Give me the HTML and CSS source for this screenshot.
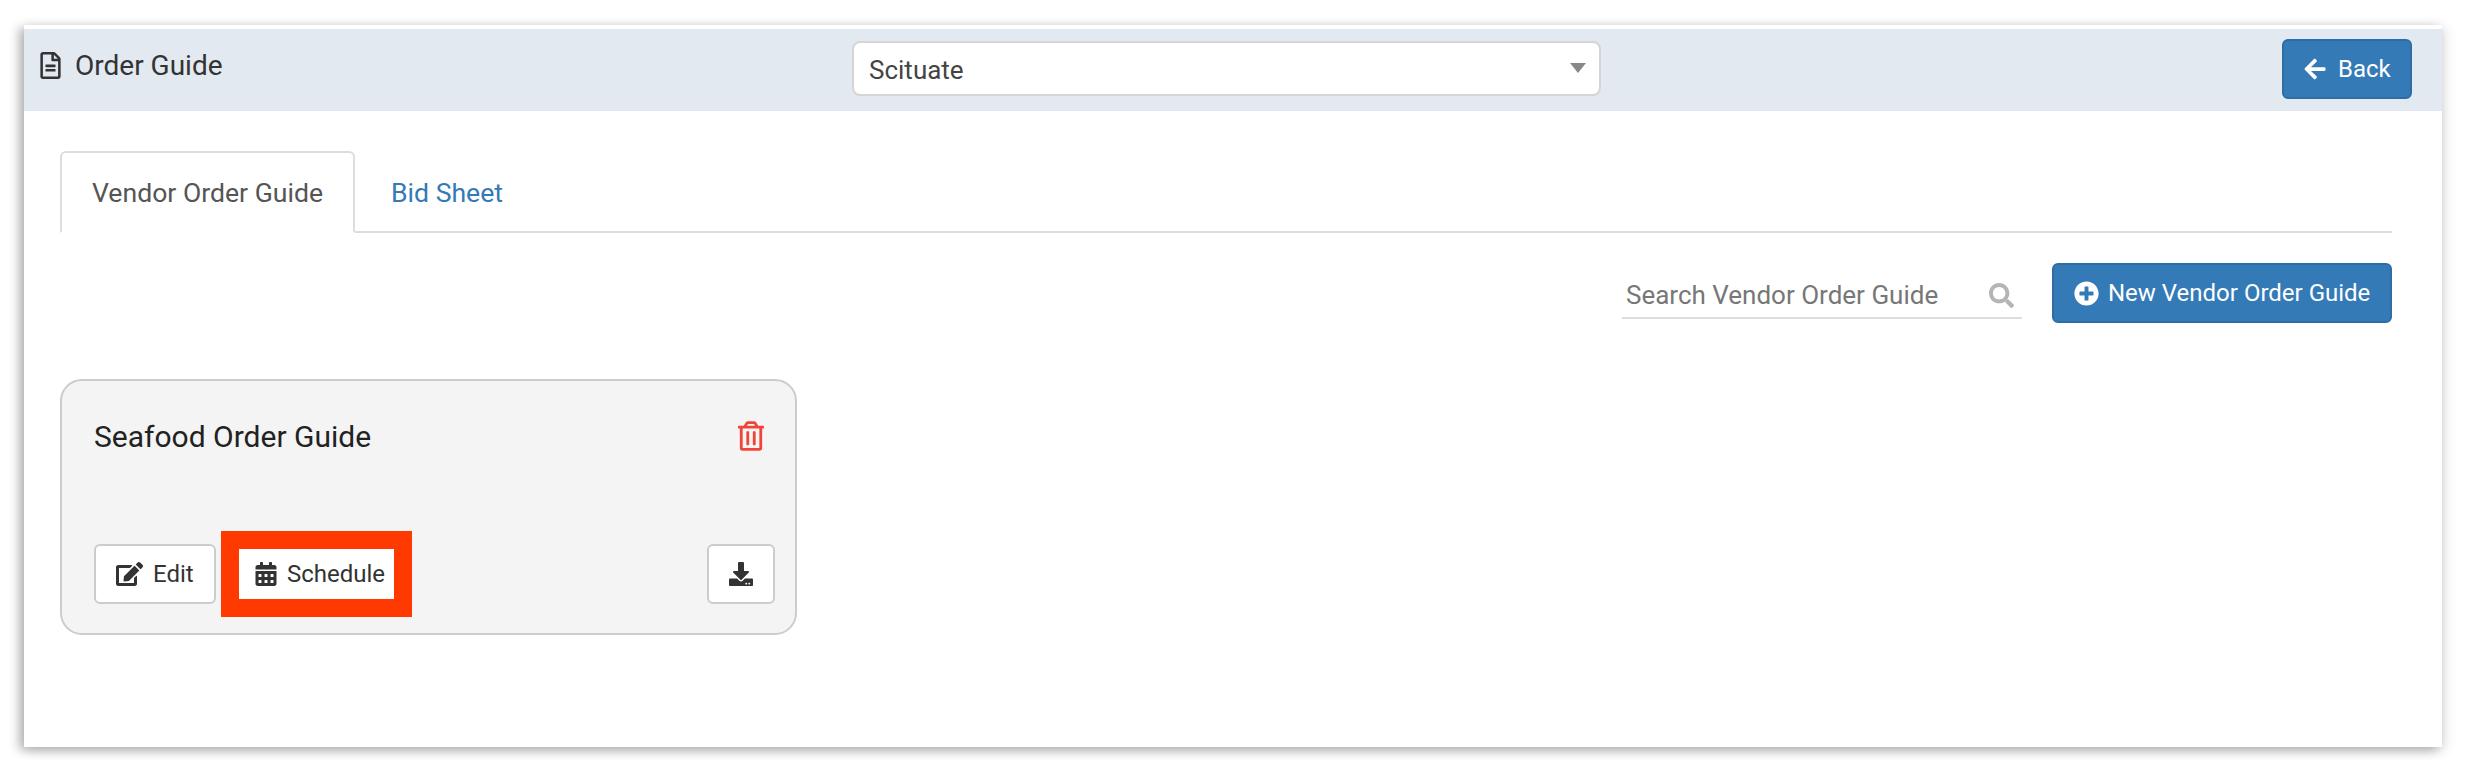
FILE: index.html
```html
<!DOCTYPE html>
<html lang="en">
<head>
    <meta charset="UTF-8">
    <meta name="viewport" content="width=device-width, initial-scale=1.0">
    <title>Order Guide</title>
    <link rel="stylesheet" href="styles.css">
</head>
<body>
    <div class="window">
        <header class="page-header">
            <div class="page-title">
                <svg class="icon icon-file" viewBox="0 0 384 512"><path d="M288 248v28c0 6.6-5.4 12-12 12H108c-6.6 0-12-5.4-12-12v-28c0-6.6 5.4-12 12-12h168c6.6 0 12 5.4 12 12zm-12 72H108c-6.6 0-12 5.4-12 12v28c0 6.6 5.4 12 12 12h168c6.6 0 12-5.4 12-12v-28c0-6.6-5.4-12-12-12zm108-188.1V464c0 26.5-21.5 48-48 48H48c-26.5 0-48-21.5-48-48V48C0 21.5 21.5 0 48 0h204.1C264.8 0 277 5.1 286 14.1L369.9 98c9 8.9 14.1 21.2 14.1 33.9zm-128-80V128h76.1L256 51.9zM336 464V176H232c-13.3 0-24-10.7-24-24V48H48v416h288z"/></svg>
                <span>Order Guide</span>
            </div>
            <div class="location-select">
                <span>Scituate</span>
                <i class="caret"></i>
            </div>
            <a class="btn btn-primary btn-back">
                <svg class="icon icon-arrow" viewBox="0 0 448 512"><path d="M257.5 445.1l-22.2 22.2c-9.4 9.4-24.6 9.4-33.9 0L7 273c-9.4-9.4-9.4-24.6 0-33.9L201.4 44.7c9.4-9.4 24.6-9.4 33.9 0l22.2 22.2c9.5 9.5 9.3 25-.4 34.3L136.6 216H424c13.3 0 24 10.7 24 24v32c0 13.3-10.7 24-24 24H136.6l120.5 114.8c9.8 9.3 10 24.8.4 34.3z"/></svg>
                Back
            </a>
        </header>

        <main class="content">
            <nav class="tabs">
                <a class="tab tab-active">Vendor Order Guide</a>
                <a class="tab">Bid Sheet</a>
            </nav>

            <div class="toolbar">
                <div class="search">
                    <span>Search Vendor Order Guide</span>
                    <svg class="icon icon-search" viewBox="0 0 512 512"><path d="M505 442.7L405.3 343c-4.5-4.5-10.6-7-17-7H372c27.6-35.3 44-79.7 44-128C416 93.1 322.9 0 208 0S0 93.1 0 208s93.1 208 208 208c48.3 0 92.7-16.4 128-44v16.3c0 6.4 2.5 12.5 7 17l99.7 99.7c9.4 9.4 24.6 9.4 33.9 0l28.3-28.3c9.4-9.4 9.4-24.6.1-34zM208 336c-70.7 0-128-57.2-128-128 0-70.7 57.2-128 128-128 70.7 0 128 57.2 128 128 0 70.7-57.2 128-128 128z"/></svg>
                </div>
                <a class="btn btn-primary btn-new">
                    <svg class="icon icon-plus" viewBox="0 0 512 512"><path d="M256 8C119 8 8 119 8 256s111 248 248 248 248-111 248-248S393 8 256 8zm144 276c0 6.6-5.4 12-12 12h-92v92c0 6.6-5.4 12-12 12h-56c-6.6 0-12-5.4-12-12v-92h-92c-6.6 0-12-5.4-12-12v-56c0-6.6 5.4-12 12-12h92v-92c0-6.6 5.4-12 12-12h56c6.6 0 12 5.4 12 12v92h92c6.6 0 12 5.4 12 12v56z"/></svg>
                    New Vendor Order Guide
                </a>
            </div>

            <section class="card">
                <div class="card-top">
                    <h2 class="card-title">Seafood Order Guide</h2>
                    <svg class="icon icon-trash" viewBox="0 0 448 512"><path d="M268 416h24a12 12 0 0 0 12-12V188a12 12 0 0 0-12-12h-24a12 12 0 0 0-12 12v216a12 12 0 0 0 12 12zM432 80h-82.41l-34-56.7A48 48 0 0 0 274.41 0H173.59a48 48 0 0 0-41.16 23.3L98.41 80H16A16 16 0 0 0 0 96v16a16 16 0 0 0 16 16h16v336a48 48 0 0 0 48 48h288a48 48 0 0 0 48-48V128h16a16 16 0 0 0 16-16V96a16 16 0 0 0-16-16zM171.84 50.91A6 6 0 0 1 177 48h94a6 6 0 0 1 5.15 2.91L293.61 80H154.39zM368 464H80V128h288zm-212-48h24a12 12 0 0 0 12-12V188a12 12 0 0 0-12-12h-24a12 12 0 0 0-12 12v216a12 12 0 0 0 12 12z"/></svg>
                </div>
                <div class="card-actions">
                    <a class="btn btn-default btn-edit">
                        <svg class="icon icon-edit" viewBox="0 0 576 512"><path d="M402.6 83.2l90.2 90.2c3.8 3.8 3.8 10 0 13.8L274.4 405.6l-92.8 10.3c-12.4 1.4-22.9-9.1-21.5-21.5l10.3-92.8L388.8 83.2c3.8-3.8 10-3.8 13.8 0zm162-22.9l-48.8-48.8c-15.2-15.2-39.9-15.2-55.2 0l-35.4 35.4c-3.8 3.8-3.8 10 0 13.8l90.2 90.2c3.8 3.8 10 3.8 13.8 0l35.4-35.4c15.2-15.3 15.2-40 0-55.2zM384 346.2V448H64V128h229.8c3.2 0 6.2-1.3 8.5-3.5l40-40c7.6-7.6 2.2-20.5-8.5-20.5H48C21.5 64 0 85.5 0 112v352c0 26.5 21.5 48 48 48h352c26.5 0 48-21.5 48-48V306.2c0-10.7-12.9-16-20.5-8.5l-40 40c-2.2 2.3-3.5 5.3-3.5 8.5z"/></svg>
                        Edit
                    </a>
                    <a class="btn-schedule">
                        <svg class="icon icon-calendar" viewBox="0 0 448 512"><path d="M0 464c0 26.5 21.5 48 48 48h352c26.5 0 48-21.5 48-48V192H0v272zm320-196c0-6.6 5.4-12 12-12h40c6.6 0 12 5.4 12 12v40c0 6.6-5.4 12-12 12h-40c-6.6 0-12-5.4-12-12v-40zm0 128c0-6.6 5.4-12 12-12h40c6.6 0 12 5.4 12 12v40c0 6.6-5.4 12-12 12h-40c-6.6 0-12-5.4-12-12v-40zM192 268c0-6.6 5.4-12 12-12h40c6.6 0 12 5.4 12 12v40c0 6.6-5.4 12-12 12h-40c-6.6 0-12-5.4-12-12v-40zm0 128c0-6.6 5.4-12 12-12h40c6.6 0 12 5.4 12 12v40c0 6.6-5.4 12-12 12h-40c-6.6 0-12-5.4-12-12v-40zM64 268c0-6.6 5.4-12 12-12h40c6.6 0 12 5.4 12 12v40c0 6.6-5.4 12-12 12H76c-6.6 0-12-5.4-12-12v-40zm0 128c0-6.6 5.4-12 12-12h40c6.6 0 12 5.4 12 12v40c0 6.6-5.4 12-12 12H76c-6.6 0-12-5.4-12-12v-40zM400 64h-48V16c0-8.8-7.2-16-16-16h-32c-8.8 0-16 7.2-16 16v48H160V16c0-8.8-7.2-16-16-16h-32c-8.8 0-16 7.2-16 16v48H48C21.5 64 0 85.5 0 112v48h448v-48c0-26.5-21.5-48-48-48z"/></svg>
                        Schedule
                    </a>
                    <a class="btn btn-default btn-download">
                        <svg class="icon icon-download" viewBox="0 0 512 512"><path d="M216 0h80c13.3 0 24 10.7 24 24v168h87.7c17.8 0 26.7 21.5 14.1 34.1L269.7 378.3c-7.5 7.5-19.8 7.5-27.3 0L90.1 226.1c-12.6-12.6-3.7-34.1 14.1-34.1H192V24c0-13.3 10.7-24 24-24zm296 376v112c0 13.3-10.7 24-24 24H24c-13.3 0-24-10.7-24-24V376c0-13.3 10.7-24 24-24h146.7l49 49c20.1 20.1 52.5 20.1 72.6 0l49-49H488c13.3 0 24 10.7 24 24zm-124 88c0-11-9-20-20-20s-20 9-20 20 9 20 20 20 20-9 20-20zm64 0c0-11-9-20-20-20s-20 9-20 20 9 20 20 20 20-9 20-20z"/></svg>
                    </a>
                </div>
            </section>
        </main>
    </div>
</body>
</html>
```

FILE: styles.css
```css
* {
    box-sizing: border-box;
}

html, body {
    height: 100%;
}

body {
    margin: 0;
    padding: 25px 25px 25px 24px;
    background: #ffffff;
    font-family: Roboto, "Liberation Sans", sans-serif;
    overflow: hidden;
}

.window {
    width: 2418px;
    height: 722px;
    padding-top: 4px;
    background: #ffffff;
    box-shadow: -5px 3px 10px rgba(0, 0, 0, 0.28), 3px 3px 12px rgba(0, 0, 0, 0.12);
}

.icon {
    display: block;
    flex: none;
    fill: currentColor;
}

/* header band */
.page-header {
    display: grid;
    grid-template-columns: 812px 749px 1fr;
    align-items: center;
    height: 82px;
    padding: 0 30px 0 16px;
    background: #e3e9f1;
}

.page-title {
    display: flex;
    align-items: center;
    gap: 14px;
    margin-top: -10px;
    color: #333333;
    font-size: 28px;
}

.icon-file {
    width: 21px;
    height: 27px;
}

.location-select {
    display: flex;
    align-items: center;
    justify-content: space-between;
    height: 55px;
    margin-top: -3px;
    padding: 3px 13px 0 15px;
    background: #ffffff;
    border: 2px solid #d5d5d5;
    border-radius: 8px;
    color: #444444;
    font-size: 26px;
}

.caret {
    width: 0;
    height: 0;
    margin-top: -4px;
    border-left: 8px solid transparent;
    border-right: 8px solid transparent;
    border-top: 10px solid #888888;
}

/* buttons */
.btn {
    display: flex;
    align-items: center;
    height: 60px;
    border-radius: 6px;
    font-size: 24px;
}

.btn-primary {
    background: #337ab7;
    border: 2px solid #2e6da4;
    color: #ffffff;
}

.btn-default {
    background: #ffffff;
    border: 2px solid #cccccc;
    color: #333333;
}

.btn-back {
    justify-self: end;
    width: 130px;
    margin-top: -2px;
    padding-left: 20px;
    gap: 12px;
}

.icon-arrow {
    width: 22px;
    height: 24px;
}

/* tabs */
.content {
    padding: 40px 50px 0 36px;
}

.tabs {
    display: flex;
    height: 82px;
    border-bottom: 2px solid #dddddd;
}

.tab {
    display: flex;
    align-items: center;
    height: 82px;
    padding: 0 36px;
    color: #337ab7;
    font-size: 26.6px;
    white-space: nowrap;
}

.tab-active {
    width: 295px;
    padding: 0 0 0 30px;
    background: #ffffff;
    border: 2px solid #dddddd;
    border-bottom-color: #ffffff;
    border-radius: 6px 6px 0 0;
    color: #555555;
}

/* search + new button */
.toolbar {
    display: flex;
    justify-content: flex-end;
    gap: 30px;
    margin-top: 30px;
}

.search {
    display: flex;
    align-items: center;
    justify-content: space-between;
    width: 400px;
    height: 56px;
    padding: 10px 8px 0 4px;
    border-bottom: 2px solid #dddddd;
    color: #777777;
    font-size: 26px;
}

.icon-search {
    width: 25px;
    height: 25px;
    color: #b5b5b5;
}

.btn-new {
    width: 340px;
    padding-left: 20px;
    gap: 9px;
}

.icon-plus {
    width: 25px;
    height: 25px;
}

/* order guide card */
.card {
    display: flex;
    flex-direction: column;
    justify-content: space-between;
    width: 737px;
    height: 256px;
    margin-top: 56px;
    padding: 38px 20px 29px 32px;
    background: #f4f4f4;
    border: 2px solid #cccccc;
    border-radius: 22px;
}

.card-top {
    display: flex;
    align-items: flex-start;
    justify-content: space-between;
}

.card-title {
    margin: 0;
    color: #222222;
    font-size: 30px;
    font-weight: 400;
}

.icon-trash {
    width: 26px;
    height: 30px;
    margin: 2px 11px 0 0;
    color: #f04438;
}

.card-actions {
    display: flex;
    align-items: center;
    gap: 5px;
    height: 60px;
}

.btn-edit {
    width: 122px;
    padding-left: 20px;
    gap: 10px;
}

.icon-edit {
    width: 27px;
    height: 24px;
}

/* red marker round the schedule button */
.btn-schedule {
    display: flex;
    align-items: center;
    gap: 10px;
    width: 191px;
    height: 86px;
    padding-left: 16px;
    background: #ffffff;
    border: 18px solid #ff3a00;
    color: #333333;
    font-size: 24px;
}

.icon-calendar {
    width: 22px;
    height: 24px;
}

.btn-download {
    justify-content: center;
    width: 68px;
    margin-left: auto;
}

.icon-download {
    width: 24px;
    height: 24px;
}
```
